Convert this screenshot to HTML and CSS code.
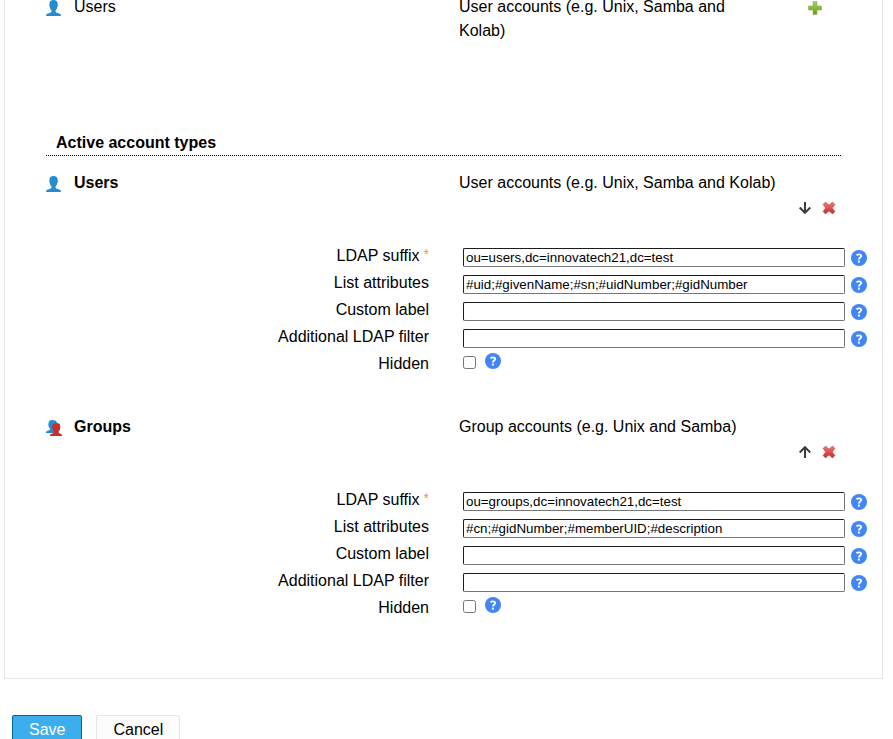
FILE: index.html
```html
<!DOCTYPE html>
<html lang="en">
<head>
<meta charset="utf-8">
<title>Account types</title>
<link rel="stylesheet" href="styles.css">
</head>
<body>
<svg class="sprites" aria-hidden="true">
  <defs>
    <linearGradient id="green" x1="0" y1="0" x2="0" y2="1"><stop offset="0" stop-color="#a9cf62"/><stop offset="1" stop-color="#6b9a1d"/></linearGradient>
    <linearGradient id="red" x1="0" y1="0" x2="0" y2="1"><stop offset="0" stop-color="#e58080"/><stop offset="1" stop-color="#c82828"/></linearGradient>
  </defs>
  <symbol id="user" viewBox="0 0 16 16"><path fill="#268bd2" d="M7.500 0C4.800 0 3.500 1.300 3.500 3.500L3.300 5.500 3.900 7.500C4.200 9 5 10 5.500 10.500V12C4 13 1 13.300.2 14.500V16H14.800V14.500C14 13.300 11 13 9.600 12V10.500C10.500 9.700 11 8.500 11.200 7.500L11.900 5.500 11.600 3.500C11.600 1.300 10.200 0 7.500 0Z"/></symbol>
  <symbol id="group" viewBox="0 0 16 16"><path fill="#268bd2" d="M6.300 0C4 0 2.600 1 2.600 3L2.300 5C2.600 7 3.500 8 4 8.500V9.500C3 10.700.5 10.800 0 12V13H11V3C11 1 9 0 6.300 0Z"/><path fill="#c5302c" d="M10.500 3C7.600 3 6.200 4 6.300 6L6.200 8C6.500 10 7.300 11 7.900 11.500V12.500C7 13.700 4.500 13.800 4 15V16H16V15C15.500 13.800 13.700 13.700 12.600 12.500V11.500C13.600 10.700 14.100 9.500 14.300 8V6C14.300 4 13 3 10.500 3Z"/></symbol>
  <symbol id="plus" viewBox="0 0 16 16"><path fill="url(#green)" stroke="#8fb44f" stroke-width=".6" d="M6 1.500H10V6H14.500V10H10V14.500H6V10H1.500V6H6Z"/></symbol>
  <symbol id="cross" viewBox="0 0 16 16"><path fill="url(#red)" stroke="#d05050" stroke-width=".6" stroke-linejoin="round" d="M4.500 2 8 5 11.500 2 14 4.500 11.300 8 14 11.500 11.500 14 8 11 4.500 14 2 11.500 4.700 8 2 4.500Z"/></symbol>
  <symbol id="down" viewBox="0 0 16 16"><path fill="none" stroke="#3c3c3c" stroke-width="2" d="M8 2V13M2.700 7.500 8 12.800 13.300 7.500"/></symbol>
  <symbol id="up" viewBox="0 0 16 16"><path fill="none" stroke="#3c3c3c" stroke-width="2" d="M8 14V3M2.700 8.500 8 3.200 13.300 8.500"/></symbol>
  <symbol id="help" viewBox="0 0 16 16"><circle cx="8" cy="8" r="8" fill="#4285f4"/><path fill="none" stroke="#fff" stroke-width="1.800" d="M5.500 5.200C6.300 4.500 7 4.300 8 4.300 9.500 4.300 10.200 5 10.200 6 10.200 7.500 7.900 7.600 7.900 9.600"/><path fill="#fff" d="M6.900 10.600h2v2h-2z"/></symbol>
</svg>
<form>
  <main class="panel">
    <section class="available">
      <div class="type">
        <div class="name"><svg class="icon"><use href="#user"/></svg>Users</div>
        <div class="about"><span>User accounts (e.g. Unix, Samba and Kolab)</span>
          <button class="tool" type="button" aria-label="Add"><svg class="icon"><use href="#plus"/></svg></button></div>
      </div>
    </section>
    <h2 class="title">Active account types</h2>
    <section class="active">
      <div class="type">
        <h3 class="name"><svg class="icon"><use href="#user"/></svg>Users</h3>
        <div>User accounts (e.g. Unix, Samba and Kolab)</div>
      </div>
      <div class="tools">
        <button class="tool" type="button" aria-label="Down"><svg class="icon"><use href="#down"/></svg></button>
        <button class="tool" type="button" aria-label="Remove"><svg class="icon"><use href="#cross"/></svg></button>
      </div>
      <div class="fields">
        <label for="u1">LDAP suffix<span class="required">*</span></label>
        <div class="field"><input type="text" id="u1" value="ou=users,dc=innovatech21,dc=test"><svg class="icon"><use href="#help"/></svg></div>
        <label for="u2">List attributes</label>
        <div class="field"><input type="text" id="u2" value="#uid;#givenName;#sn;#uidNumber;#gidNumber"><svg class="icon"><use href="#help"/></svg></div>
        <label for="u3">Custom label</label>
        <div class="field"><input type="text" id="u3"><svg class="icon"><use href="#help"/></svg></div>
        <label for="u4">Additional LDAP filter</label>
        <div class="field"><input type="text" id="u4"><svg class="icon"><use href="#help"/></svg></div>
        <label for="u5">Hidden</label>
        <div class="field check"><input type="checkbox" id="u5"><svg class="icon"><use href="#help"/></svg></div>
      </div>
    </section>
    <section class="active">
      <div class="type">
        <h3 class="name"><svg class="icon"><use href="#group"/></svg>Groups</h3>
        <div>Group accounts (e.g. Unix and Samba)</div>
      </div>
      <div class="tools">
        <button class="tool" type="button" aria-label="Up"><svg class="icon"><use href="#up"/></svg></button>
        <button class="tool" type="button" aria-label="Remove"><svg class="icon"><use href="#cross"/></svg></button>
      </div>
      <div class="fields">
        <label for="g1">LDAP suffix<span class="required">*</span></label>
        <div class="field"><input type="text" id="g1" value="ou=groups,dc=innovatech21,dc=test"><svg class="icon"><use href="#help"/></svg></div>
        <label for="g2">List attributes</label>
        <div class="field"><input type="text" id="g2" value="#cn;#gidNumber;#memberUID;#description"><svg class="icon"><use href="#help"/></svg></div>
        <label for="g3">Custom label</label>
        <div class="field"><input type="text" id="g3"><svg class="icon"><use href="#help"/></svg></div>
        <label for="g4">Additional LDAP filter</label>
        <div class="field"><input type="text" id="g4"><svg class="icon"><use href="#help"/></svg></div>
        <label for="g5">Hidden</label>
        <div class="field check"><input type="checkbox" id="g5"><svg class="icon"><use href="#help"/></svg></div>
      </div>
    </section>
  </main>
  <div class="buttons">
    <button class="button primary" type="submit">Save</button>
    <button class="button" type="button">Cancel</button>
  </div>
</form>
</body>
</html>
```
FILE: styles.css
```css
* { box-sizing: border-box; }
html { overflow: hidden; }
body {
  margin: 0;
  background: #fff;
  color: #000;
  font: 16px/24px "Liberation Sans", Arial, sans-serif;
}
.sprites { position: absolute; width: 0; height: 0; }
.icon { display: block; flex: none; width: 16px; height: 16px; }
.panel {
  margin: -5px 10px 0 4px;
  padding: 0 15px 19px 41px;
  border: 1px solid #e6e6e6;
  border-top: 0;
}
.available { padding-bottom: 88px; }
.type {
  display: grid;
  grid-template-columns: 413fr 382fr;
  margin-right: 26px;
}
.name { display: flex; gap: 12px; margin: 0; font-size: 16px; }
.name .icon { margin-top: 5px; }
.about { display: grid; grid-template-columns: 1fr 34px; column-gap: 54px; align-items: start; }
.title {
  margin: 0 26px 15px 0;
  padding: 0 10px;
  border-bottom: 1px dotted #000;
  font-size: 16px;
}
.tools {
  display: flex;
  justify-content: flex-end;
  gap: 8px;
  margin-right: 30px;
  padding: 5px 0 28px;
}
.tool { padding: 0; border: 0; background: none; cursor: pointer; }
.about .tool { margin-top: 5px; }
.fields {
  display: grid;
  grid-template-columns: 413fr 408fr;
  grid-auto-rows: 27px;
  margin-bottom: 36px;
}
.fields label { padding-right: 30px; text-align: right; }
.required { margin-left: 4px; color: #f89828; font-size: 14px; vertical-align: 2px; line-height: 1; }
.field { display: flex; align-items: flex-start; gap: 6px; padding: 4px 0 0 4px; }
.field .icon { margin-top: 2px; }
.field input[type="text"] {
  flex: 1;
  min-width: 0;
  height: 19px;
  padding: 1px 2px;
  border: 1px solid;
  border-color: #1c1c1c #767676 #767676 #1c1c1c;
  border-radius: 2px;
  background: #fff;
  color: #000;
  font-family: inherit;
  font-size: smaller;
}
.field input[type="checkbox"] { width: 13px; height: 13px; margin: 0; }
.check { gap: 9px; }
.check .icon { margin-top: -3px; }
.buttons { display: flex; gap: 14px; padding: 36px 12px 0; }
.button {
  height: 30px;
  padding: 0 16px;
  border: 1px solid #e6e6e6;
  border-radius: 2px;
  background: #fcfcfc;
  color: #000;
  font: 16px "Liberation Sans", Arial, sans-serif;
}
.primary { border-color: #00659c; background: #3daeed; color: #fff; }
```
